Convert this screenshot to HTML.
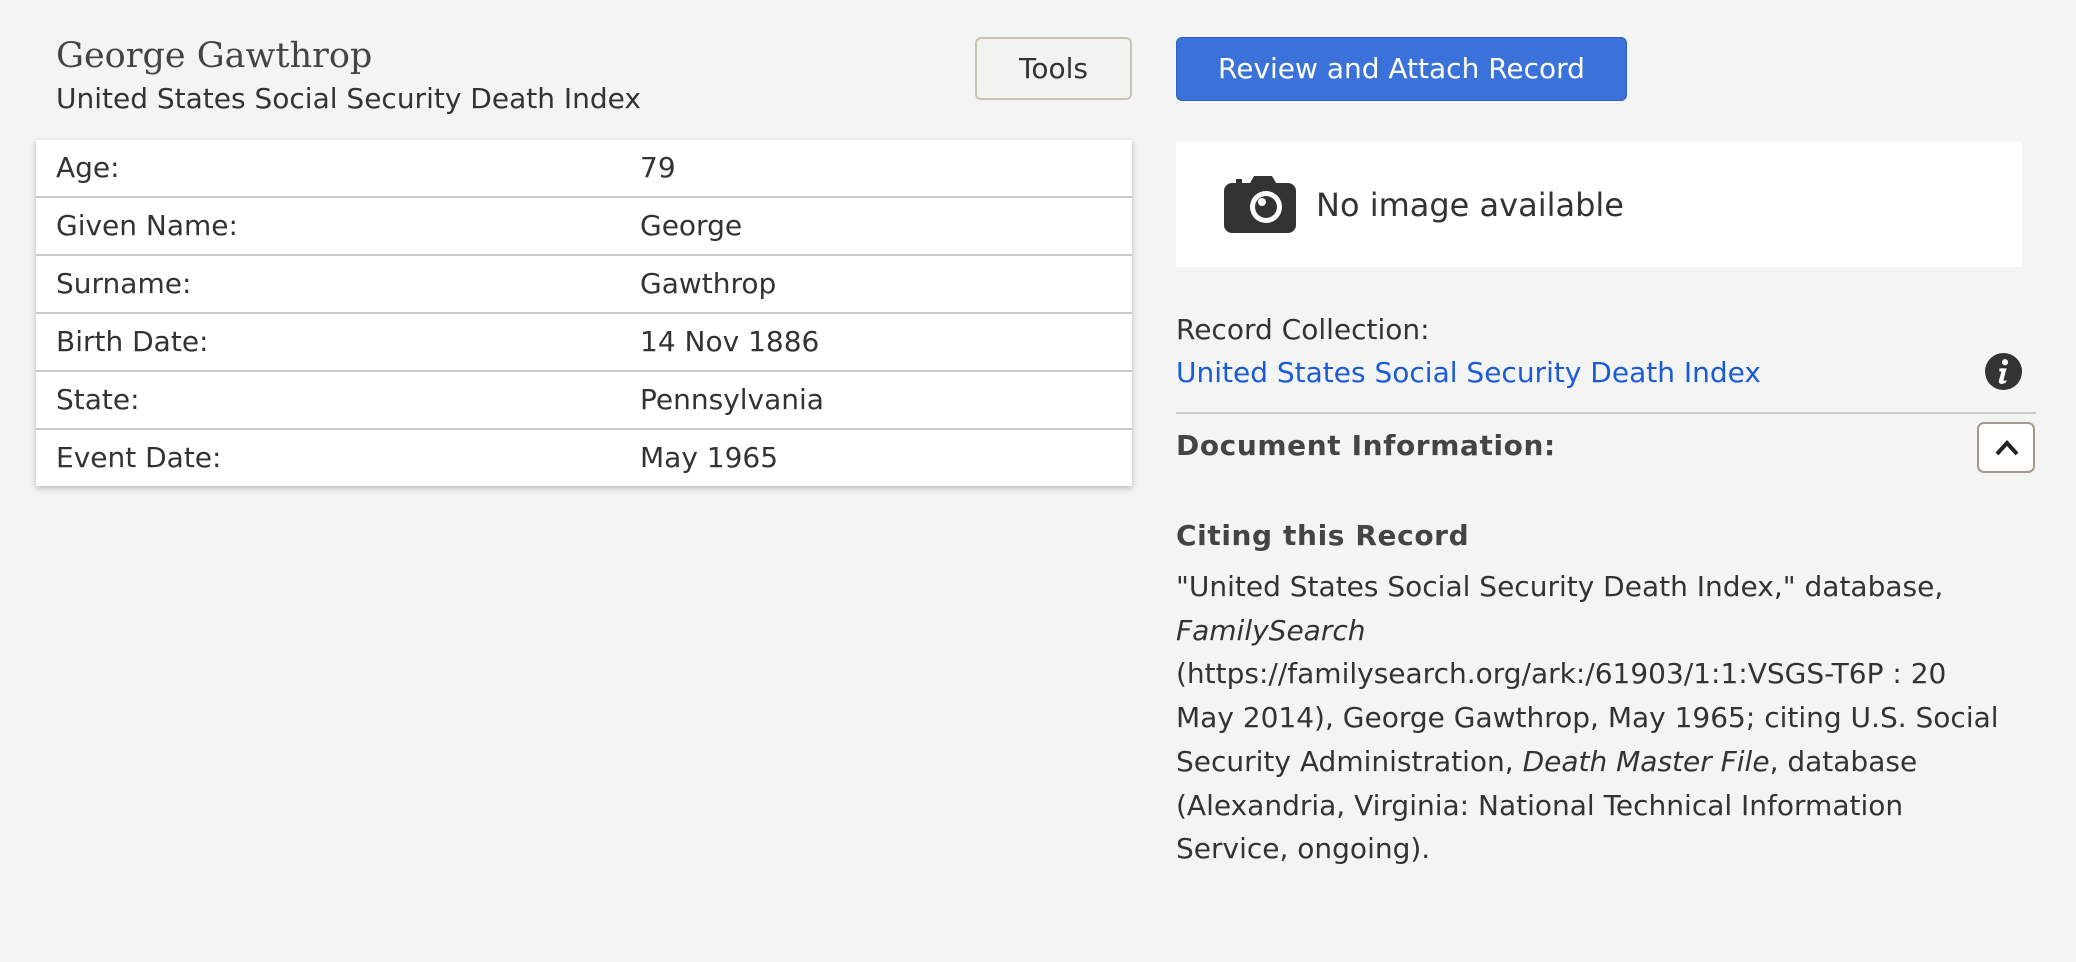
<!DOCTYPE html>
<html><head><meta charset="utf-8"><style>
html,body{margin:0;padding:0;}
body{width:2076px;height:962px;background:#f4f4f4;font-family:"DejaVu Sans","Liberation Sans",sans-serif;color:#333;position:relative;overflow:hidden;font-size:28px;}
.abs{position:absolute;white-space:nowrap;line-height:34px;}
.title{left:56px;top:36px;font-family:"DejaVu Serif","Liberation Serif",serif;font-size:35px;color:#444;line-height:40px;}
.sub{left:56px;top:82px;font-size:28px;color:#333;}
.tools{left:975px;top:37px;width:157px;height:63px;border:2px solid #c9c3b3;border-radius:6px;background:#f2f2ee;box-sizing:border-box;text-align:center;line-height:59px;font-size:28px;color:#333;}
.blue{left:1176px;top:37px;width:451px;height:64px;background:#3a72d9;border:1px solid #2d62c4;box-sizing:border-box;border-radius:6px;color:#fff;text-align:center;line-height:62px;font-size:28px;}
.table{position:absolute;left:36px;top:140px;width:1096px;background:#fff;box-shadow:0 2px 6px rgba(0,0,0,.25);}
.row{height:56px;line-height:56px;border-bottom:2px solid #ccc;position:relative;font-size:28px;}
.row:last-child{border-bottom:none;}
.row .l{position:absolute;left:20px;}
.row .v{position:absolute;left:604px;}
.img{position:absolute;left:1176px;top:142px;width:846px;height:125px;background:#fff;}
.link{color:#1a5bd6;}
.bold{font-weight:bold;color:#444;}
</style></head><body>
<div class="abs title">George Gawthrop</div>
<div class="abs sub">United States Social Security Death Index</div>
<div class="abs tools">Tools</div>
<div class="abs blue">Review and Attach Record</div>
<div class="table">
<div class="row"><span class="l">Age:</span><span class="v">79</span></div>
<div class="row"><span class="l">Given Name:</span><span class="v">George</span></div>
<div class="row"><span class="l">Surname:</span><span class="v">Gawthrop</span></div>
<div class="row"><span class="l">Birth Date:</span><span class="v">14 Nov 1886</span></div>
<div class="row"><span class="l">State:</span><span class="v">Pennsylvania</span></div>
<div class="row"><span class="l">Event Date:</span><span class="v">May 1965</span></div>
</div>
<div class="img">
<svg style="position:absolute;left:48px;top:33px" width="72" height="58" viewBox="0 0 72 58">
<path d="M8 8h4v-4h6v4h8l4-7h18l4 7h12a8 8 0 0 1 8 8v34a8 8 0 0 1-8 8H8a8 8 0 0 1-8-8V16a8 8 0 0 1 8-8z" fill="#333"/>
<circle cx="42" cy="32" r="16" fill="#fff"/><circle cx="42" cy="32" r="11" fill="#333"/><circle cx="38" cy="27" r="4" fill="#fff"/>
</svg>
<div class="abs" style="left:140px;top:44px;font-size:32px;line-height:38px;color:#333">No image available</div>
</div>
<div class="abs" style="left:1176px;top:313px">Record Collection:</div>
<div class="abs link" style="left:1176px;top:356px">United States Social Security Death Index</div>
<svg style="position:absolute;left:1985px;top:353px" width="37" height="37" viewBox="0 0 36 36"><circle cx="18" cy="18" r="18" fill="#333"/><circle cx="19.5" cy="9" r="3" fill="#fff"/><path d="M14 15h7l-3 11c0 1.5 2 1 3 0l-.5 2.5c-2 2-8 2.5-7-1.5l2.5-9h-2z" fill="#fff"/></svg>
<div style="position:absolute;left:1176px;top:412px;width:860px;height:2px;background:#ccc"></div>
<div class="abs bold" style="left:1176px;top:429px;letter-spacing:0.6px">Document Information:</div>
<div class="abs" style="left:1977px;top:422px;width:58px;height:51px;border:2px solid #a39b88;border-radius:7px;background:#fff;box-sizing:border-box">
<svg style="position:absolute;left:15px;top:14px" width="26" height="20" viewBox="0 0 26 20"><path d="M3 16L13 5l10 11" fill="none" stroke="#222" stroke-width="4"/></svg></div>
<div class="abs bold" style="left:1176px;top:519px;letter-spacing:0.6px">Citing this Record</div>
<div class="abs" style="left:1176px;top:565px;line-height:43.7px;">"United States Social Security Death Index," database,<br><i>FamilySearch</i><br>(https://familysearch.org/ark:/61903/1:1:VSGS-T6P : 20<br>May 2014), George Gawthrop, May 1965; citing U.S. Social<br>Security Administration, <i>Death Master File</i>, database<br>(Alexandria, Virginia: National Technical Information<br>Service, ongoing).</div>
</body></html>
